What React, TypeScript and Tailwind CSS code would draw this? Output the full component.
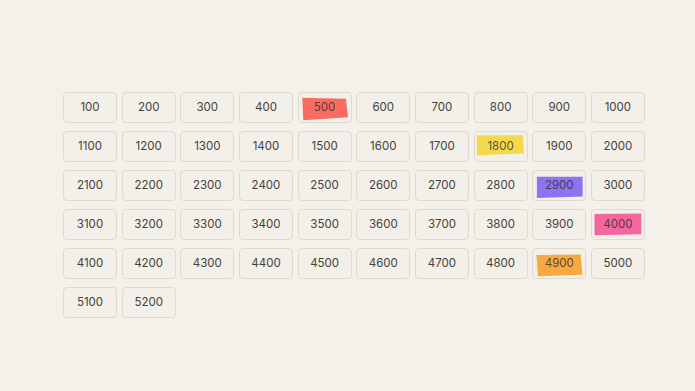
import React from 'react';

type Mark = { color: string; clip: string };

// hand-drawn looking highlight patches, keyed by value
const marks: Record<number, Mark> = {
  500: { color: 'bg-[#f96c62]', clip: '[clip-path:polygon(7%_16%,91%_20%,95%_84%,9%_94%)]' },
  1800: { color: 'bg-[#f5d94c]', clip: '[clip-path:polygon(4%_12%,93%_11%,95%_74%,5%_81%)]' },
  2900: { color: 'bg-[#8c74f0]', clip: '[clip-path:polygon(7%_20%,95%_20%,95%_88%,7%_93%)]' },
  4000: { color: 'bg-[#f4679e]', clip: '[clip-path:polygon(5%_14%,95%_12%,95%_84%,5%_87%)]' },
  4900: { color: 'bg-[#f8a944]', clip: '[clip-path:polygon(6%_21%,91%_19%,95%_89%,9%_94%)]' },
};

const values = Array.from({ length: 52 }, (_, i) => (i + 1) * 100);

function Cell({ value }: { value: number }) {
  const mark = marks[value];
  return (
    <div className="relative flex h-[31px] items-center justify-center rounded-[4px] border border-[#dedad2] bg-[#f3f0e9]">
      {mark && <div className={`absolute inset-0 ${mark.color} ${mark.clip}`} />}
      <span className={`relative text-[11.5px] ${mark ? 'text-[#2e2a27]/80' : 'text-[#44413d]'}`}>{value}</span>
    </div>
  );
}

export default function App() {
  return (
    <div
      className="min-h-screen bg-[#f4f1ea] pl-[63px] pt-[92px]"
      style={{ fontFamily: 'Inter, "Liberation Sans", sans-serif' }}
    >
      <div className="grid grid-cols-[repeat(10,54px)] gap-x-[4.67px] gap-y-[8px]">
        {values.map((v) => (
          <Cell key={v} value={v} />
        ))}
      </div>
    </div>
  );
}
